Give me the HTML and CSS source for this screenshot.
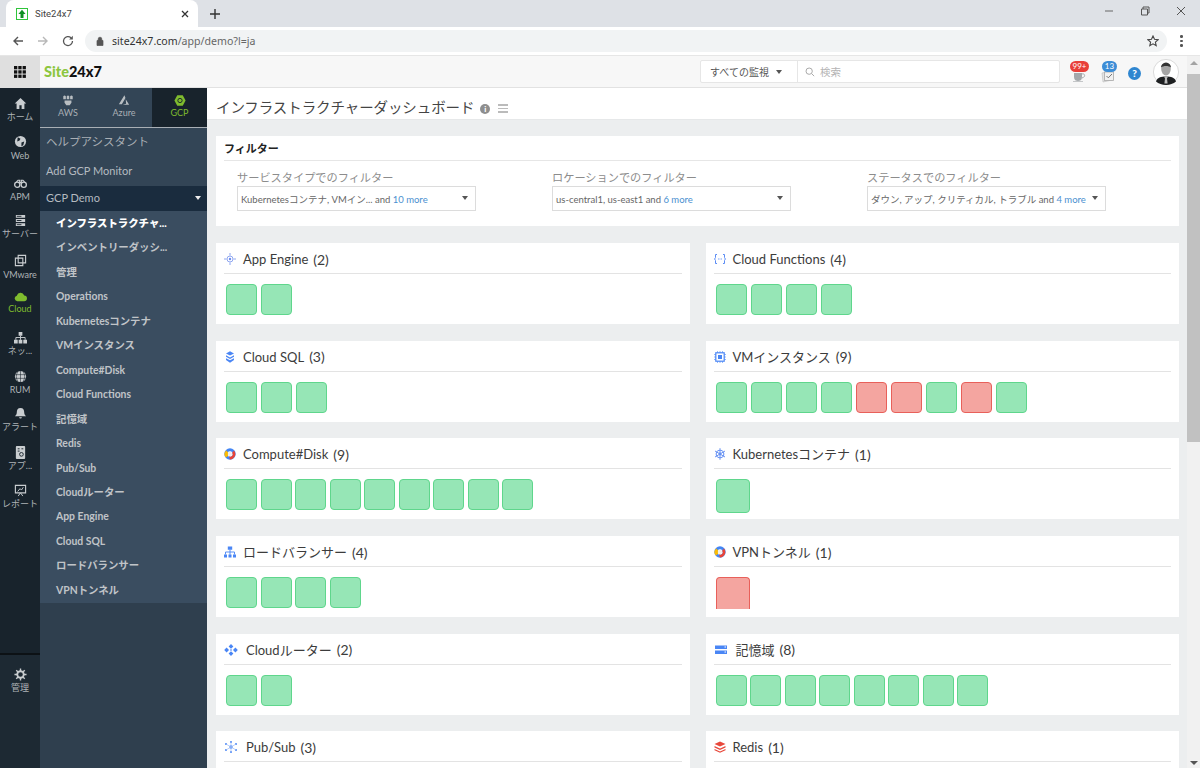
FILE: index.html
```html
<!DOCTYPE html>
<html lang="ja">
<head>
<meta charset="utf-8">
<title>Site24x7</title>
<link rel="stylesheet" href="styles.css">
</head>
<body>
<div class="tabstrip">
  <div class="tab">
    <svg class="favicon" viewBox="0 0 12 12"><rect x=".5" y=".5" width="11" height="11" fill="#fff" stroke="#2fc53a"/><path d="M6 1.800 9.600 6H7.500v4h-3V6H2.400z" fill="#0f8f24"/></svg>
    <span class="tabtitle">Site24x7</span>
    <svg class="tabclose" viewBox="0 0 8 8"><path d="M1 1l6 6M7 1 1 7" stroke="#333" stroke-width="1.300"/></svg>
  </div>
  <svg class="newtab" viewBox="0 0 10 10"><path d="M5 0v10M0 5h10" stroke="#333" stroke-width="1.400"/></svg>
  <div class="winctl">
    <svg viewBox="0 0 10 10"><path d="M1 5h8" stroke="#666"/></svg>
    <svg viewBox="0 0 10 10"><path d="M1.500 3h6v6h-6zM3 3V1h6v6H7.500" fill="none" stroke="#555"/></svg>
    <svg viewBox="0 0 10 10"><path d="M1 1l8 8M9 1l-8 8" stroke="#555"/></svg>
  </div>
</div>
<div class="toolbar">
  <svg class="navicon" viewBox="0 0 12 12"><path d="M11 6H2M6 2 2 6l4 4" fill="none" stroke="#555" stroke-width="1.400"/></svg>
  <svg class="navicon" viewBox="0 0 12 12"><path d="M1 6h9M6 2l4 4-4 4" fill="none" stroke="#b8b8b8" stroke-width="1.400"/></svg>
  <svg class="navicon" viewBox="0 0 12 12"><path d="M10.500 6A4.500 4.500 0 1 1 9 2.700" fill="none" stroke="#555" stroke-width="1.300"/><path d="M10.800 .8v3.700H7.100z" fill="#555"/></svg>
  <div class="omnibox">
    <svg class="lock" viewBox="0 0 8 10"><path d="M1 4.500h6V9.500H1zM2.200 4.500V3a1.800 1.800 0 0 1 3.600 0v1.500" fill="#555" stroke="#555" stroke-width=".7" stroke-linejoin="round"/></svg>
    <span class="url">site24x7.com<span class="urlpath">/app/demo?l=ja</span></span>
    <svg class="star" viewBox="0 0 12 12"><path d="M6 1l1.500 3.300 3.600.4-2.700 2.400.8 3.600L6 8.800l-3.200 1.900.8-3.600L.9 4.700l3.600-.4z" fill="none" stroke="#444" stroke-width="1.100"/></svg>
  </div>
  <div class="kebab"><i></i><i></i><i></i></div>
</div>
<div class="app">
  <div class="main">
    <div class="topbar">
      <div class="grid-btn">
        <svg viewBox="0 0 12 12" fill="#111"><rect width="3.300" height="3.300"/><rect x="4.300" width="3.300" height="3.300"/><rect x="8.600" width="3.300" height="3.300"/><rect y="4.300" width="3.300" height="3.300"/><rect x="4.300" y="4.300" width="3.300" height="3.300"/><rect x="8.600" y="4.300" width="3.300" height="3.300"/><rect y="8.600" width="3.300" height="3.300"/><rect x="4.300" y="8.600" width="3.300" height="3.300"/><rect x="8.600" y="8.600" width="3.300" height="3.300"/></svg>
      </div>
      <div class="logo"><span class="logo-a">Site</span>24x7</div>
      <div class="searchgroup">
        <div class="scope"><span>すべての監視</span><i class="caret"></i></div>
        <div class="search">
          <svg viewBox="0 0 12 12"><circle cx="5" cy="5" r="3.800" fill="none" stroke="#aaa" stroke-width="1.200"/><path d="M8 8l3 3" stroke="#aaa" stroke-width="1.200"/></svg>
          <span>検索</span>
        </div>
      </div>
      <div class="topicons">
        <div class="ticon">
          <svg viewBox="0 0 14 14"><path d="M2 4h8v4c0 3-2 4-4 4s-4-1-4-4z" fill="#a4a8ab"/><path d="M10 5c3-1 4 3 0 4" fill="none" stroke="#a4a8ab"/><path d="M1 12.500h10" stroke="#c4c6c8"/></svg>
          <span class="badge red">99+</span>
        </div>
        <div class="ticon">
          <svg viewBox="0 0 14 14"><path d="M1 4l9-2 1 9-9 2z" fill="#e4e4e4" stroke="#bbb" stroke-width=".6"/><rect x="3.500" y="3" width="9" height="8.500" fill="#f1f1f1" stroke="#a9a9a9" stroke-width=".8"/><path d="M5.500 7l1.800 1.800L11 5" fill="none" stroke="#777"/></svg>
          <span class="badge blue">13</span>
        </div>
        <div class="help">?</div>
        <svg class="avatar" viewBox="0 0 26 26"><circle cx="13" cy="13" r="12.600" fill="#fff" stroke="#ccc" stroke-width=".7"/><path d="M3 22.500c1-4 5-5 10-5s9 1 10 5c-5 4.500-15 4.500-20 0z" fill="#1d1f21"/><path d="M11 17.500h4l-1 2 .6 5h-3.200l.6-5z" fill="#bbb"/><ellipse cx="13" cy="10" rx="4.800" ry="6.500" fill="#a5a5a5"/><path d="M8 8.500c0-6.500 10-6.500 10 0-2-2-8-2-10 0z" fill="#333"/></svg>
      </div>
    </div>
    <div class="workspace">
      <nav class="rail">
        <a class="rail-item i1"><svg viewBox="0 0 14 14"><path d="M7 1 .8 7h2v6h3V9h2.400v4h3V7h2z" fill="#c9cdd0"/></svg><span>ホーム</span></a>
        <a class="rail-item i2"><svg viewBox="0 0 14 14"><circle cx="7" cy="7" r="6" fill="#c9cdd0"/><path d="M4 2.500l3 1.500-1 2-2.500 1zM8 8l3-1-1 4-2 1z" fill="#18232c"/></svg><span>Web</span></a>
        <a class="rail-item i3"><svg viewBox="0 0 16 14"><circle cx="4" cy="8.500" r="3.200" fill="none" stroke="#c9cdd0" stroke-width="1.600"/><circle cx="12" cy="8.500" r="3.200" fill="none" stroke="#c9cdd0" stroke-width="1.600"/><path d="M3 5l2-2h2v3h2V3h2l2 2" fill="none" stroke="#c9cdd0" stroke-width="1.400"/></svg><span>APM</span></a>
        <a class="rail-item i4"><svg viewBox="0 0 14 14"><path d="M2 1h10v3H2zM2 5.500h10v3H2zM2 10h10v3H2z" fill="#c9cdd0"/><path d="M3 2.500h5M3 7h5M3 11.500h5" stroke="#18232c"/></svg><span>サーバー</span></a>
        <a class="rail-item i5"><svg viewBox="0 0 14 14"><path d="M4.500 1.500h8v8h-8zM1.500 4.500h8v8h-8z" fill="none" stroke="#c9cdd0" stroke-width="1.200"/></svg><span>VMware</span></a>
        <a class="rail-item i6 active"><svg viewBox="0 0 14 14"><path d="M3.500 12A3 3 0 0 1 3 6.100 4.200 4.200 0 0 1 11 5.800 3.100 3.100 0 0 1 10.700 12z" fill="#7fbc2e"/></svg><span>Cloud</span></a>
        <a class="rail-item i7"><svg viewBox="0 0 14 14"><path d="M5 1h4v4H5zM0 9.500h4v4H0zM5 9.500h4v4H5zM10 9.500h4v4h-4z" fill="#c9cdd0"/><path d="M7 5v4.500M2 9.500V7h10v2.500" fill="none" stroke="#c9cdd0"/></svg><span>ネッ...</span></a>
        <a class="rail-item i8"><svg viewBox="0 0 14 14"><circle cx="7" cy="7" r="6" fill="#c9cdd0"/><path d="M1 5h12M1 9h12M7 1v12M4 2c-2 3-2 7 0 10M10 2c2 3 2 7 0 10" fill="none" stroke="#18232c" stroke-width=".6"/></svg><span>RUM</span></a>
        <a class="rail-item i9"><svg viewBox="0 0 14 14"><path d="M7 1c3 0 4 2 4 5 0 2 1 3 2 4H1c1-1 2-2 2-4 0-3 1-5 4-5zM5.500 11h3a1.500 1.500 0 0 1-3 0z" fill="#c9cdd0"/></svg><span>アラート</span></a>
        <a class="rail-item i10"><svg viewBox="0 0 14 14"><rect x="2" y="0" width="10" height="14" rx="1" fill="#c9cdd0"/><circle cx="8" cy="9" r="2" fill="none" stroke="#18232c"/><path d="M4 3h2M8 3h2M4 5.500h2" stroke="#18232c"/></svg><span>アプ...</span></a>
        <a class="rail-item i11"><svg viewBox="0 0 14 14"><path d="M1.500 1.500h11v8h-11z" fill="none" stroke="#c9cdd0" stroke-width="1.200"/><path d="M4 8l2.500-3L8 6.500l2-3M7 9.500 4.500 13M7 9.500 9.500 13" fill="none" stroke="#c9cdd0"/></svg><span>レポート</span></a>
        <div class="rail-end">
          <a class="rail-item i12"><svg viewBox="0 0 14 14"><circle cx="7" cy="7" r="3.500" fill="none" stroke="#c9cdd0" stroke-width="2"/><path d="M7 .5v3M7 10.500v3M.5 7h3M10.500 7h3M2.400 2.400l2 2M9.600 9.600l2 2M11.600 2.400l-2 2M4.400 9.600l-2 2" stroke="#c9cdd0" stroke-width="1.500"/></svg><span>管理</span></a>
        </div>
      </nav>
      <aside class="side">
        <div class="cloudtabs">
          <a class="ctab"><svg viewBox="0 0 14 12" fill="#b9bec2"><path d="M1.500 1c1-1 2-1 3 0v3.500h-3zM5.500 1c1-1 2-1 3 0v3.500h-3zM9.500 1c1-1 2-1 3 0v3.500h-3z"/><path d="M3 6h8v2.500l-2 3H5l-2-3z"/></svg><span>AWS</span></a>
          <a class="ctab"><svg viewBox="0 0 14 12" fill="#b9bec2"><path d="M7.500 0 1 10.500h3.500L8.700 3zM9 4.500l4 6.500H5.500l4-1.300z"/></svg><span>Azure</span></a>
          <a class="ctab on"><svg viewBox="0 0 14 12"><path d="M3.800 0h6.400L13.500 6l-3.300 6H3.800L.5 6z" fill="#7fbc2e"/><circle cx="7" cy="6" r="2.500" fill="none" stroke="#18232c" stroke-width="1.100"/></svg><span>GCP</span></a>
        </div>
        <a class="side-top help-a">ヘルプアシスタント</a>
        <a class="side-top add">Add GCP Monitor</a>
        <div class="group"><span>GCP Demo</span><i class="caret white"></i></div>
        <ul class="menu">
          <li class="cur">インフラストラクチャ...</li>
          <li>インベントリーダッシ...</li>
          <li>管理</li>
          <li>Operations</li>
          <li>Kubernetesコンテナ</li>
          <li>VMインスタンス</li>
          <li>Compute#Disk</li>
          <li>Cloud Functions</li>
          <li>記憶域</li>
          <li>Redis</li>
          <li>Pub/Sub</li>
          <li>Cloudルーター</li>
          <li>App Engine</li>
          <li>Cloud SQL</li>
          <li>ロードバランサー</li>
          <li>VPNトンネル</li>
        </ul>
      </aside>
      <main class="content">
        <div class="titlebar">
          <h1>インフラストラクチャーダッシュボード</h1>
          <span class="info">i</span>
          <span class="burger"><i></i><i></i><i></i></span>
        </div>
        <section class="filters">
          <h2>フィルター</h2>
          <div class="fgrid">
            <div class="fcol"><label>サービスタイプでのフィルター</label><div class="fsel"><span>Kubernetesコンテナ, VMイン... and <b>10 more</b></span><i class="caret"></i></div></div>
            <div class="fcol"><label>ロケーションでのフィルター</label><div class="fsel"><span>us-central1, us-east1 and <b>6 more</b></span><i class="caret"></i></div></div>
            <div class="fcol"><label>ステータスでのフィルター</label><div class="fsel"><span>ダウン, アップ, クリティカル, トラブル and <b>4 more</b></span><i class="caret"></i></div></div>
          </div>
        </section>
        <div class="cards">
          <section class="card">
            <header><svg class="ic" viewBox="0 0 12 12"><circle cx="6" cy="6" r="3" fill="none" stroke="#8ea6f0"/><circle cx="6" cy="6" r="1.200" fill="#6d8df0"/><path d="M0 6h2.500M9.500 6H12M6 0v2.500M6 9.500V12" stroke="#8ea6f0"/></svg><h3>App Engine</h3><em>(2)</em></header>
            <div class="tiles wider"><i></i><i></i></div>
          </section>
          <section class="card">
            <header><svg class="ic" viewBox="0 0 12 12"><path d="M3 1.500H1.500v3L.6 6l.9 1.500v3H3M9 1.500h1.500v3l.9 1.500-.9 1.500v3H9" fill="none" stroke="#5b8cf5"/><path d="M4 6h.8M5.600 6h.8M7.200 6H8" stroke="#5b8cf5"/></svg><h3>Cloud Functions</h3><em>(4)</em></header>
            <div class="tiles wider"><i></i><i></i><i></i><i></i></div>
          </section>
          <section class="card">
            <header><svg class="ic" viewBox="0 0 12 12" fill="#4a86f5"><path d="M6 .3 10 2.400 6 4.500 2 2.400z"/><path d="M2 4.300 6 6.400l4-2.100v1.500L6 7.900 2 5.800zM2 7.200l4 2.100 4-2.100v1.700L6 11.700 2 8.900z"/></svg><h3>Cloud SQL</h3><em>(3)</em></header>
            <div class="tiles wider"><i></i><i></i><i></i></div>
          </section>
          <section class="card">
            <header><svg class="ic" viewBox="0 0 12 12"><rect x="1.800" y="1.800" width="8.400" height="8.400" fill="none" stroke="#4a86f5" stroke-width="1.200"/><rect x="4" y="4" width="4" height="4" fill="#4a86f5"/><path d="M3.500 0v12M6 0v12M8.500 0v12M0 3.500h12M0 6h12M0 8.500h12" stroke="#4a86f5" stroke-width=".6" stroke-dasharray="1.800 8.400"/></svg><h3>VMインスタンス</h3><em>(9)</em></header>
            <div class="tiles wider"><i></i><i></i><i></i><i></i><i class="bad"></i><i class="bad"></i><i></i><i class="bad"></i><i></i></div>
          </section>
          <section class="card">
            <header><svg class="ic" viewBox="0 0 12 12"><circle cx="6" cy="6" r="4.200" fill="none" stroke="#4285f4" stroke-width="3"/><path d="M2 9.500A4.200 4.200 0 0 1 2.600 2.500L4.300 5A2 2 0 0 0 4.500 7.500z" fill="#fbbc05"/><path d="M10 2.500A5.500 5.500 0 0 1 6 11.500L5 8a2 2 0 0 0 3-3z" fill="#ea4335"/><circle cx="6" cy="6" r="2.200" fill="#eee"/></svg><h3>Compute#Disk</h3><em>(9)</em></header>
            <div class="tiles"><i></i><i></i><i></i><i></i><i></i><i></i><i></i><i></i><i></i></div>
          </section>
          <section class="card">
            <header><svg class="ic" viewBox="0 0 12 12"><circle cx="6" cy="6" r="3.800" fill="none" stroke="#6b94f3" stroke-width="1.100"/><circle cx="6" cy="6" r="1.400" fill="#4a86f5"/><path d="M6 .2v11.600M1 3l10 6M1 9l10-6" stroke="#6b94f3"/></svg><h3>Kubernetesコンテナ</h3><em>(1)</em></header>
            <div class="tiles solo"><i></i></div>
          </section>
          <section class="card">
            <header><svg class="ic" viewBox="0 0 12 12" fill="#4a86f5"><path d="M3.800 .5h4.400v3.200H3.800zM0 8.500h3v3H0zM4.500 8.500h3v3h-3zM9 8.500h3v3H9z"/><path d="M6 3.700v5M1.500 8.500V6h9v2.500" fill="none" stroke="#4a86f5" stroke-width=".9"/></svg><h3>ロードバランサー</h3><em>(4)</em></header>
            <div class="tiles"><i></i><i></i><i></i><i></i></div>
          </section>
          <section class="card">
            <header><svg class="ic" viewBox="0 0 12 12"><circle cx="6" cy="6" r="4.200" fill="none" stroke="#4285f4" stroke-width="3"/><path d="M2 9.500A4.200 4.200 0 0 1 2.600 2.500L4.300 5A2 2 0 0 0 4.500 7.500z" fill="#fbbc05"/><path d="M10 2.500A5.500 5.500 0 0 1 6 11.500L5 8a2 2 0 0 0 3-3z" fill="#ea4335"/><circle cx="6" cy="6" r="2.200" fill="#eee"/></svg><h3>VPNトンネル</h3><em>(1)</em></header>
            <div class="tiles solo"><i class="bad"></i></div>
          </section>
          <section class="card">
            <header><svg class="ic wide" viewBox="0 0 14 12" fill="#4a86f5"><path d="M7 0l2.400 2.400L7 4.800 4.600 2.400zM7 7.200l2.400 2.400L7 12 4.600 9.600zM2.600 3.600 5 6 2.600 8.400.2 6zM11.400 3.600 13.800 6l-2.400 2.400L9 6z"/><path d="M7 5l1 1-1 1-1-1z"/></svg><h3>Cloudルーター</h3><em>(2)</em></header>
            <div class="tiles"><i></i><i></i></div>
          </section>
          <section class="card">
            <header><svg class="ic wide" viewBox="0 0 14 12" fill="#4a86f5"><path d="M1 1.500h12v3.500H1zM1 6.500h12V10H1z"/><path d="M10.500 2.500h1.500v1h-1.500zM10.500 7.500h1.500v1h-1.500z" fill="#fff"/></svg><h3>記憶域</h3><em>(8)</em></header>
            <div class="tiles"><i></i><i></i><i></i><i></i><i></i><i></i><i></i><i></i></div>
          </section>
          <section class="card">
            <header><svg class="ic wide" viewBox="0 0 14 12" fill="#4a86f5"><circle cx="7" cy="6" r="1.700"/><circle cx="7" cy="1" r="1"/><circle cx="7" cy="11" r="1"/><circle cx="2" cy="3" r="1"/><circle cx="12" cy="3" r="1"/><circle cx="2" cy="9" r="1"/><circle cx="12" cy="9" r="1"/><path d="M7 1v10M2 3l10 6M2 9l10-6" stroke="#9dbbf7" stroke-width=".7"/></svg><h3>Pub/Sub</h3><em>(3)</em></header>
            <div class="tiles"><i></i><i></i><i></i></div>
          </section>
          <section class="card">
            <header><svg class="ic" viewBox="0 0 12 12" fill="#e8483b"><path d="M6 .5 11.500 3 6 5.500.5 3zM.5 5 6 7.500 11.500 5v1.500L6 9 .5 6.500zM.5 8 6 10.500 11.500 8v1.200L6 11.700.5 9.200z"/></svg><h3>Redis</h3><em>(1)</em></header>
            <div class="tiles"><i></i></div>
          </section>
        </div>
      </main>
    </div>
  </div>
  <div class="vscroll"><i class="up"></i><div class="thumb"></div><i class="down"></i></div>
</div>
</body>
</html>
```
FILE: styles.css
```css
* { box-sizing: border-box; }
html, body { margin: 0; padding: 0; height: 768px; overflow: hidden; background: #fff; }
body { font-family: Lato, "Noto Sans CJK JP", sans-serif; display: flex; flex-direction: column; color: #333; }
a { color: inherit; text-decoration: none; display: block; }
ul { list-style: none; margin: 0; padding: 0; }
h1, h2, h3 { margin: 0; font-weight: 400; }
em { font-style: normal; }

.tabstrip { height: 27px; background: #dee1e6; display: flex; align-items: flex-end; padding-left: 6px; flex: none; }
.tab { width: 192px; height: 27px; background: #fff; border-radius: 8px 8px 0 0; display: flex; align-items: center; padding: 0 9px 0 10px; }
.favicon { width: 12px; height: 12px; flex: none; }
.tabtitle { font: 9.500px Roboto, sans-serif; color: #444; margin-left: 7px; flex: 1; }
.tabclose { width: 8px; height: 8px; }
.newtab { width: 10px; height: 10px; margin: 0 0 8px 12px; }
.winctl { margin-left: auto; height: 27px; display: flex; align-items: center; gap: 26px; padding: 0 14px 5px 0; }
.winctl svg { width: 10px; height: 10px; }

.toolbar { height: 29px; display: flex; align-items: center; padding: 0 0 0 12px; background: #fff; flex: none; gap: 13px; border-bottom: 1px solid #e6e6e6; }
.navicon { width: 12px; height: 12px; flex: none; }
.omnibox { margin-left: -2px; width: 1082px; height: 22px; border-radius: 11px; background: #f1f3f4; display: flex; align-items: center; padding: 0 8px 0 11px; }
.lock { width: 8px; height: 10px; flex: none; }
.url { font: 10.600px "Noto Sans", sans-serif; color: #333; margin-left: 8px; flex: 1; }
.urlpath { color: #666; }
.star { width: 12px; height: 12px; }
.kebab { display: flex; flex-direction: column; gap: 2px; }
.kebab i { width: 2.500px; height: 2.500px; background: #555; border-radius: 50%; }

.app { flex: 1; display: flex; min-height: 0; }
.main { flex: 1; display: flex; flex-direction: column; min-width: 0; }
.topbar { height: 32px; flex: none; display: flex; align-items: center; background: #f7f7f7; border-bottom: 1px solid #e2e2e2; }
.grid-btn { width: 40px; height: 32px; background: #dfdfdf; display: flex; align-items: center; justify-content: center; }
.grid-btn svg { width: 12px; height: 12px; }
.logo { font: 900 14.500px Lato, sans-serif; color: #111; margin-left: 4px; }
.logo-a { color: #8cc63f; }
.searchgroup { margin-left: auto; display: flex; height: 23px; width: 360px; border: 1px solid #e6e6e6; background: #fff; border-radius: 2px; }
.scope { width: 97px; border-right: 1px solid #e6e6e6; display: flex; align-items: center; padding-left: 9px; gap: 7px; font-size: 10px; color: #555; }
.search { flex: 1; display: flex; align-items: center; padding-left: 7px; gap: 5px; font-size: 10.500px; color: #b4b4b4; }
.search svg { width: 10px; height: 10px; }
.caret { width: 0; height: 0; border-left: 3.500px solid transparent; border-right: 3.500px solid transparent; border-top: 4px solid #555; display: block; flex: none; }
.caret.white { border-top-color: #eee; }
.topicons { display: flex; align-items: center; width: 127px; padding-left: 12px; }
.ticon { width: 14px; height: 14px; position: relative; margin-right: 15px; top: 4px; }
.ticon svg { width: 14px; height: 14px; display: block; }
.badge { position: absolute; color: #fff; font-size: 8px; line-height: 11px; height: 11px; border-radius: 6px; text-align: center; }
.badge.red { background: #e8403a; width: 19px; left: -2px; top: -8px; }
.badge.blue { background: #3d8dd6; width: 15px; left: 1px; top: -8px; }
.help { width: 13px; height: 13px; border-radius: 50%; background: #2f86d0; color: #fff; font-size: 10px; font-weight: 900; line-height: 13px; text-align: center; margin: 4px 0 0 -2px; }
.avatar { width: 26px; height: 26px; margin-left: 12px; }

.workspace { flex: 1; display: flex; min-height: 0; }
.rail { width: 40px; flex: none; background: #18232c; display: flex; flex-direction: column; position: relative; }
.rail-item { display: flex; flex-direction: column; align-items: center; color: #aeb3b7; font-size: 9px; line-height: 12px; white-space: nowrap; }
.rail-item svg { width: 13px; height: 13px; flex: none; margin-bottom: 1px; }
.rail-item.active { color: #7fbc2e; }
.rail-item.active svg { margin-bottom: 0; }
.i1 { padding-top: 9px; height: 47px; }
.i2 { height: 42px; }
.i2 svg, .i5 svg { margin-bottom: 2px; }
.i3 { height: 37px; }
.i4 { height: 40px; }
.i5 { height: 36px; }
.i6 { height: 41px; }
.i7 { height: 39px; }
.i8 { height: 37px; }
.i9 { height: 39px; }
.i10 { height: 38px; }
.i11 { height: 40px; }
.rail-end { margin-top: auto; height: 115px; border-top: 2px solid #0c1115; padding-top: 13px; background: #1d2933; }
.i12 { height: 30px; }

.side { width: 167px; flex: none; background: #2f3f4e; display: flex; flex-direction: column; }
.cloudtabs { height: 40px; display: flex; border-bottom: 1px solid #a9afb5; background: #334556; flex: none; }
.ctab { display: flex; flex-direction: column; align-items: center; font-size: 9px; line-height: 11px; color: #a9afb5; padding-top: 7px; width: 56px; }
.ctab svg { width: 12px; height: 11px; margin-bottom: 1px; }
.ctab.on { background: #18232c; color: #7fbc2e; width: 55px; }
.side-top { background: #334556; color: #b4bac0; font-size: 11px; padding-left: 6px; flex: none; }
.help-a { height: 28px; line-height: 27px; font-size: 11.500px; color: #a9afb5; }
.add { height: 30px; line-height: 29px; }
.group { height: 25px; background: #1a2c3e; color: #b4bac0; font-size: 11px; display: flex; align-items: center; justify-content: space-between; padding: 0 6px 2px; flex: none; }
.menu { background: #3a4d60; height: 392px; flex: none; }
.menu li { height: 24.460px; line-height: 24.460px; padding-left: 16px; color: #c0c4c8; font-size: 10.400px; font-weight: 700; white-space: nowrap; }
.menu li.cur { color: #fff; font-weight: 900; }

.content { flex: 1; min-width: 0; background: #eceeef; overflow: hidden; display: flex; flex-direction: column; }
.titlebar { height: 32px; background: #fff; display: flex; align-items: center; padding: 8px 0 0 9px; flex: none; border-bottom: 1px solid #e6e8e9; }
.titlebar h1 { font-size: 14.500px; color: #444; letter-spacing: -.1px; line-height: 20px; }
.info { width: 10px; height: 10px; border-radius: 50%; background: #8e8e8e; color: #fff; font: 900 8px/10px Lato, sans-serif; text-align: center; margin: 2px 0 0 6px; }
.burger { display: flex; flex-direction: column; gap: 2px; margin: 2px 0 0 8px; }
.burger i { width: 10px; height: 1.500px; background: #bbb; display: block; }

.filters { margin: 16px 8px 0 9px; height: 90px; background: #fff; padding: 0 8px; flex: none; }
.filters h2 { font-size: 11px; font-weight: 700; color: #222; height: 25px; line-height: 26px; border-bottom: 1px solid #e6e6e6; }
.fgrid { display: grid; grid-template-columns: repeat(3, 315px); padding: 9px 0 0 13px; }
.fcol label { display: block; font-size: 11.200px; line-height: 16px; color: #8c8c8c; height: 16px; }
.fsel { width: 239px; height: 25px; border: 1px solid #dcdcdc; display: flex; align-items: center; justify-content: space-between; padding: 1px 7px 0 3px; font-size: 9.500px; color: #666; white-space: nowrap; }
.fsel .caret { margin-top: -3px; }
.fsel b { font-weight: 400; color: #4b90d0; }

.cards { display: grid; grid-template-columns: 473.500px 473.500px; column-gap: 16px; row-gap: 16.700px; margin: 17px 0 0 9px; }
.card { background: #fff; height: 81px; padding: 0 8px; overflow: hidden; }
.card header { height: 31px; display: flex; align-items: center; padding-top: 2px; border-bottom: 1px solid #e3e3e3; font-size: 13px; color: #3c3c3c; }
.ic { width: 12px; height: 12px; flex: none; margin-right: 7px; }
.ic.wide { width: 14px; margin-right: 8px; }
.card h3 { font-size: 13px; line-height: 18px; }
.card em { margin-left: 5px; font-size: 14px; }
.tiles { display: flex; gap: 3.500px; padding: 10px 0 0 2px; }
.tiles.wider { gap: 4px; }
.tiles i { width: 31px; height: 31px; display: block; background: #96e6b6; border: 1.300px solid #5fd68c; border-radius: 4px; flex: none; }
.tiles i.bad { background: #f4a5a0; border-color: #e8605a; }
.tiles.solo i { width: 34px; height: 34px; }
.tiles.solo i.bad { height: 32px; border-bottom: 0; border-radius: 4px 4px 0 0; }

.vscroll { width: 13px; flex: none; background: #f1f1f1; display: flex; flex-direction: column; align-items: center; position: relative; }
.vscroll .thumb { width: 13px; height: 368px; background: #c1c1c1; margin-top: 9px; }
.vscroll .up { width: 0; height: 0; border-left: 4px solid transparent; border-right: 4px solid transparent; border-bottom: 4px solid #a3a3a3; margin-top: 5px; }
.vscroll .down { width: 0; height: 0; border-left: 4px solid transparent; border-right: 4px solid transparent; border-top: 4px solid #555; margin-top: auto; margin-bottom: 3px; }
```
